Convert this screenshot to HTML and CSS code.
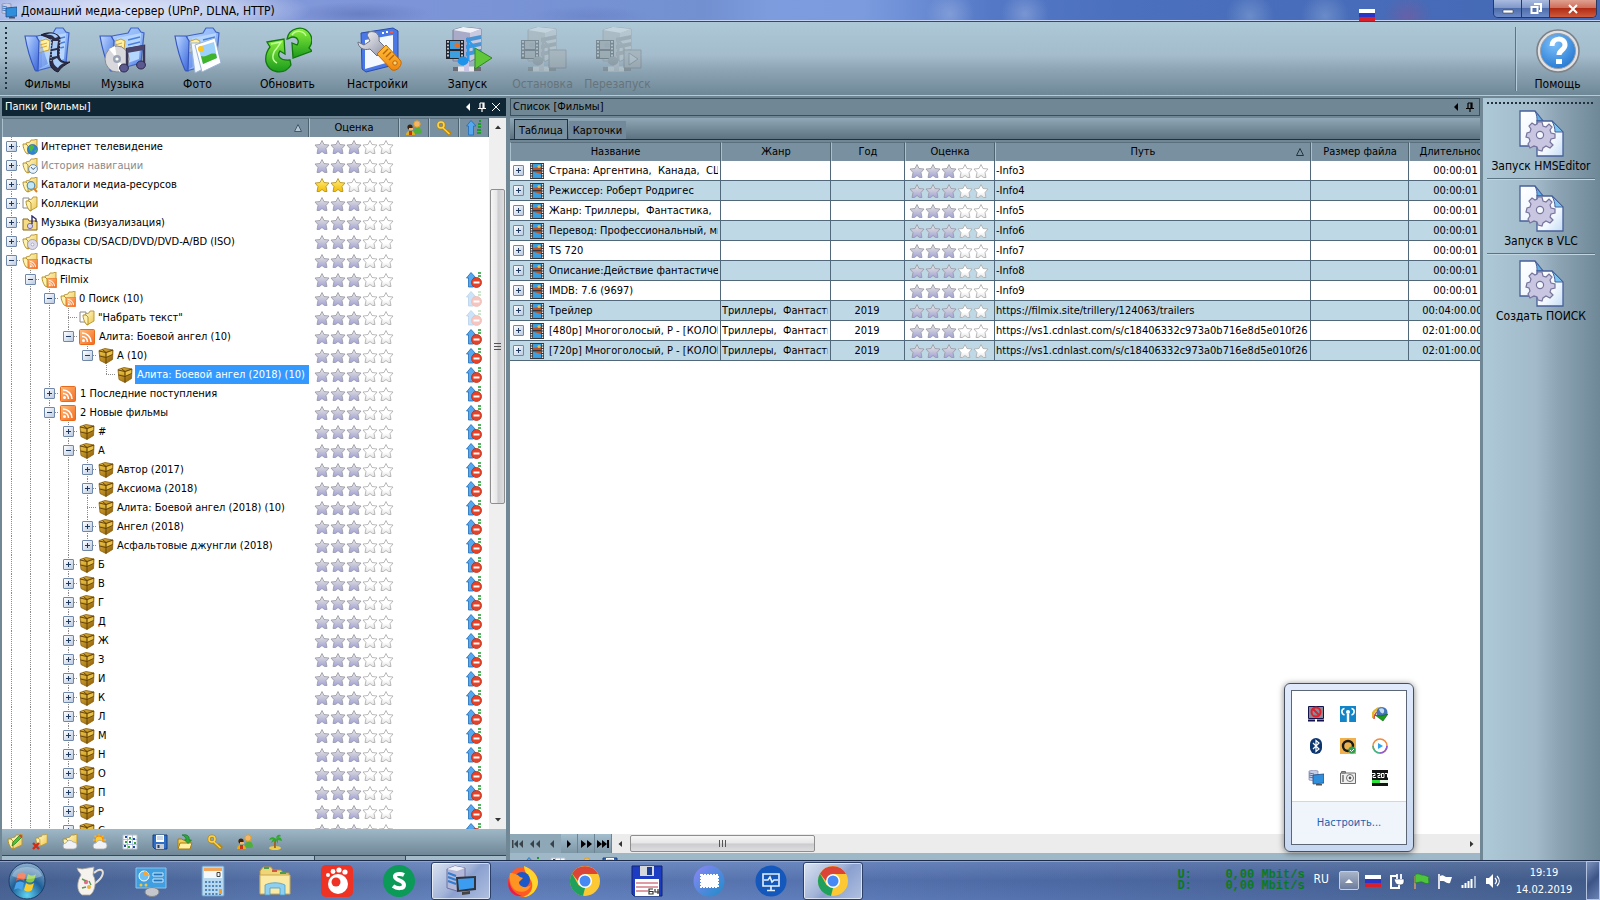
FILE: index.html
```html
<!DOCTYPE html>
<html lang="ru">
<head>
  <meta charset="UTF-8" />
  <title>Домашний медиа-сервер (UPnP, DLNA, HTTP)</title>
  <meta name="viewport" content="width=device-width, initial-scale=1" />
  <link rel="stylesheet" href="styles.css">
</head>
<body>

  <!-- Icon sprite -->
  <svg class="sprite" aria-hidden="true">
    <defs>
      <linearGradient id="gBlue" x1="0" y1="0" x2="1" y2="1"><stop offset="0" stop-color="#c4daff"/><stop offset=".5" stop-color="#78a0f0"/><stop offset="1" stop-color="#3a62d4"/></linearGradient>
      <linearGradient id="gBody" x1="0" y1="0" x2="1" y2="1"><stop offset="0" stop-color="#b4d2ff"/><stop offset=".6" stop-color="#8ab2f6"/><stop offset="1" stop-color="#4a76e0"/></linearGradient>
      <linearGradient id="gGreen" x1="0" y1="0" x2="0" y2="1"><stop offset="0" stop-color="#8cf03c"/><stop offset="1" stop-color="#1a9a1c"/></linearGradient>
      <linearGradient id="gOrange" x1="0" y1="0" x2="0" y2="1"><stop offset="0" stop-color="#ffc23a"/><stop offset="1" stop-color="#f0870f"/></linearGradient>
      <linearGradient id="gSteel" x1="0" y1="0" x2="1" y2="1"><stop offset="0" stop-color="#ffffff"/><stop offset="1" stop-color="#8c90a4"/></linearGradient>
      <linearGradient id="gPage" x1="0" y1="0" x2="1" y2="1"><stop offset="0" stop-color="#ffffff"/><stop offset=".6" stop-color="#f2f8ff"/><stop offset="1" stop-color="#c4dcf4"/></linearGradient>
      <linearGradient id="gStar" x1="0" y1="0" x2="0" y2="1"><stop offset="0" stop-color="#e8e7ee"/><stop offset=".5" stop-color="#c8c7d8"/><stop offset="1" stop-color="#a2a2da"/></linearGradient>
      <linearGradient id="gGold" x1="0" y1="0" x2="0" y2="1"><stop offset="0" stop-color="#fff08a"/><stop offset="1" stop-color="#f2bd00"/></linearGradient>
      <linearGradient id="gEmpty" x1="0" y1="0" x2="0" y2="1"><stop offset="0" stop-color="#ffffff"/><stop offset=".6" stop-color="#ffffff"/><stop offset="1" stop-color="#e2e2e2"/></linearGradient>
      <linearGradient id="gBox" x1="0" y1="0" x2="1" y2="1"><stop offset="0" stop-color="#e8bd3c"/><stop offset="1" stop-color="#8a5a08"/></linearGradient>
      <linearGradient id="gFold" x1="0" y1="0" x2="1" y2="1"><stop offset="0" stop-color="#fffbd0"/><stop offset="1" stop-color="#eec64a"/></linearGradient>
      <linearGradient id="gRss" x1="0" y1="0" x2="1" y2="1"><stop offset="0" stop-color="#ffbf80"/><stop offset="1" stop-color="#f4691c"/></linearGradient>
      <radialGradient id="gHelp" cx=".4" cy=".3" r=".8"><stop offset="0" stop-color="#7cc0fa"/><stop offset="1" stop-color="#1e72cf"/></radialGradient>
      <radialGradient id="gOrb" cx=".5" cy=".9" r=".9"><stop offset="0" stop-color="#5fd4f4"/><stop offset=".5" stop-color="#1f5f98"/><stop offset="1" stop-color="#8fb2d0"/></radialGradient>
      <linearGradient id="gTicket" x1="0" y1="0" x2="1" y2="1"><stop offset="0" stop-color="#8f86f6"/><stop offset="1" stop-color="#1c8cc8"/></linearGradient>
    </defs>

    <!-- toolbar -->
    <symbol id="bigFolder" viewBox="0 0 48 48">
      <path d="M13 9l16-3 3-5h7l3 4 3 1-3 30-30 8z" fill="url(#gBody)" stroke="#3f64c4" stroke-width="1.2"/>
      <path d="M18 11l24-5-2 26-22 8z" fill="#b4d6ff"/>
      <path d="M29 13l12-3M29 18l12-3M29 23l11-3" stroke="#4a80dc" stroke-width="1.3"/>
      <path d="M14 15l8-3 4 2-1 9-11 3z" fill="#fff0a4" stroke="#c8a02c"/><path d="M16 18l7-2M16 21l7-2" stroke="#e0a82c"/>
      <path d="M1 9l11 0 5 6 7 22-13 7c-5-12-8-23-10-35z" fill="url(#gBlue)" opacity=".55"/>
      <path d="M1 9l11 0 3 5-1 30-3-1C6 32 3 21 1 9z" fill="url(#gBlue)" stroke="#3558c0" stroke-width="1.2"/>
    </symbol>
    <symbol id="films" viewBox="0 0 48 48">
      <use href="#bigFolder"/>
      <path d="M17 8c7-4 17-2 19 3l-1 18c1 5 5 7 11 6-5 3-9 5-12 10-7-2-9-8-8-14l2-16c-1-4-6-5-11-7z" fill="#2c2e48" stroke="#1c1c30"/>
      <path d="M22 8c4-1 7 0 9 3l3-1c-1-3-7-5-12-2zM29 14h5l-1 7-5 1zM28 24l5-1v6l-5 1zM29 33l4-2c2 3 4 5 7 5-3 1-5 3-6 5-3-2-5-4-5-8z" fill="#a9cdf8"/>
      <path d="M27 12v22M36 12v16" stroke="#d8dcec" stroke-width="1" stroke-dasharray="1.2 1.8"/>
    </symbol>
    <symbol id="music" viewBox="0 0 48 48">
      <use href="#bigFolder"/>
      <ellipse cx="18" cy="32" rx="12" ry="13" fill="#d9d9dd" stroke="#8a8a90"/>
      <path d="M18 32L10 22l6-3zM18 32l8 9-6 4z" fill="#fff"/>
      <circle cx="18" cy="32" r="4" fill="#9aa4b4"/><circle cx="18" cy="32" r="1.6" fill="#fff"/>
      <path d="M28 40V22l17-3v19" fill="none" stroke="#3a3658" stroke-width="2.4"/><path d="M28 21l17-3v5l-17 3z" fill="#4a466c"/>
      <ellipse cx="25" cy="41" rx="4.4" ry="4" fill="#5c5890" stroke="#2c2848"/><ellipse cx="42" cy="38" rx="4.4" ry="4" fill="#5c5890" stroke="#2c2848"/>
    </symbol>
    <symbol id="photo" viewBox="0 0 48 48">
      <use href="#bigFolder"/>
      <path d="M17 16l14 0 2 24-12 6z" fill="#f2f8ff" stroke="#9bb4d4"/>
      <path d="M21 18l20-7 6 25-19 9z" fill="#fff" stroke="#9bb4d4"/>
      <path d="M24 20l16-5 3 16-14 6z" fill="#9fd2fb"/><path d="M27 29c6 2 8-4 15-2l1 4-14 6z" fill="#3fb42a"/><circle cx="27" cy="22" r="3" fill="#ffc41e"/>
    </symbol>
    <symbol id="refresh" viewBox="0 0 48 48">
      <path d="M3 15l17-3 1 15-5-3c-3 4-1 10 10 9l1 5c-7 11-22 8-25-3-1-6 0-10 4-15z" fill="url(#gGreen)" stroke="#12780f" stroke-width="1.3"/>
      <path d="M23 12C25 1 39-3 46 7c3 5 2 10-1 14l3 3-19 7-1-15 5 2c3-4 0-8-4-8-3 0-4 2-6 2z" fill="url(#gGreen)" stroke="#12780f" stroke-width="1.3"/>
      <path d="M7 17l10-2-4 6c-5 5-6 12 0 15M28 8c4-6 12-4 14 1" fill="none" stroke="#c4ffa0" stroke-width="1.4"/>
    </symbol>
    <symbol id="settings" viewBox="0 0 48 48">
      <path d="M7 6l32-5 5 3v33l-32 8-4-3z" fill="#4a78e4" stroke="#2a4cae"/>
      <path d="M11 13l28-5v26l-28 8z" fill="#f4f8ff"/>
      <path d="M28 6h2M32 5h2" stroke="#fff" stroke-width="2"/><path d="M36 5h3" stroke="#e8604c" stroke-width="2"/>
      <path d="M15 5c8-2 11 4 10 9l6 6-8 9-7-7c-7 2-12-2-12-7l6 3 6-4-3-6z" fill="url(#gSteel)" stroke="#6c7084"/>
      <path d="M23 27l9-9 14 15c4 4-3 12-8 10z" fill="url(#gOrange)" stroke="#c06a08"/>
      <path d="M29 27l5-5M32 30l5-5M35 33l5-5" stroke="#b86408" stroke-width="1.4"/><circle cx="41" cy="36" r="2.2" fill="#ffd27a" stroke="#b86408"/>
    </symbol>
    <symbol id="server" viewBox="0 0 48 48">
      <path d="M9 3l10-3 18 2v27l-10 5H9z" fill="#a9abc8" stroke="#7a7c9c"/><path d="M9 3l10-3 18 2-10 4z" fill="#f1f2f8"/>
      <path d="M26 6l11-4v26l-11 6z" fill="#c9cae0"/>
      <path d="M22 11l15-3v4l-15 3zM22 18l15-3v4l-15 3zM22 25l15-3v4l-15 3z" fill="#4a94d4"/>
      <path d="M9 42h28" stroke="#6c6c78" stroke-width="4"/><path d="M14 42h16" stroke="#e8e8ee" stroke-width="5"/><path d="M20 34h5v10h-5z" fill="#c9c4e4"/>
      <path d="M2 13h18v19H2z" fill="#23252e"/><path d="M6 14h10v8H6zM6 24h10v7H6z" fill="#3c9fe0"/><circle cx="13" cy="18" r="2.600" fill="#e2702a"/>
      <path d="M4 14v17M18 14v17" stroke="#e8eef4" stroke-width="1.6" stroke-dasharray="1.8 1.6"/>
      <path d="M24 34V13c3 4 8 5 5 14" fill="none" stroke="#2a9df0" stroke-width="2.2"/><ellipse cx="19" cy="34" rx="5.4" ry="4.4" fill="#1f93ea"/>
    </symbol>
    <symbol id="start" viewBox="0 0 48 48"><use href="#server"/><path d="M31 21l17 10-17 11z" fill="#62c63a" stroke="#2c8a1c"/></symbol>
    <symbol id="stop" viewBox="0 0 48 48"><use href="#server"/><path d="M30 23h17v18H30z" fill="#a8a8a8" stroke="#666"/></symbol>
    <symbol id="restart" viewBox="0 0 48 48"><use href="#server"/><path d="M30 23h17v18H30z" fill="#a8a8a8" stroke="#666"/><path d="M35 26l9 6-9 6z" fill="#c8c8c8" stroke="#666"/></symbol>
    <symbol id="help" viewBox="0 0 48 48">
      <circle cx="24" cy="24" r="21" fill="#dfe1e4" stroke="#7f8388" stroke-width="1.6"/><circle cx="24" cy="24" r="17.5" fill="url(#gHelp)" stroke="#9a9da2"/>
      <path d="M18 19c0-9 13-9 13-1 0 5-6 5-6 10" fill="none" stroke="#fff" stroke-width="5"/><path d="M22 32h6v5h-6z" fill="#fff"/>
    </symbol>
    <symbol id="script" viewBox="0 0 48 48">
      <path d="M3 2h15l8 10v25H3z" fill="url(#gPage)" stroke="#48609a" stroke-width="1.3"/><path d="M18 2l8 10h-6c0-3 0-6-2-10z" fill="#5fb0e8" stroke="#48609a"/>
      <path d="M20 12h15l11 11v24H20z" fill="url(#gPage)" stroke="#48609a" stroke-width="1.3"/><path d="M35 12l11 11h-8c0-4-1-7-3-11z" fill="#7cc4f0" stroke="#48609a"/>
      <path d="M21 13l4 0 1 4 3 1 3-3 3 3-2 3 1 3 4 1v4l-4 1-1 3 3 3-3 3-4-2-3 2-1 3-4-1-1-3-3-1-4 2-2-4 2-3-1-3-3-1 1-4 3-1 1-3-2-3 3-3 3 2 2-1z" fill="#c9c6e2" stroke="#77749c" stroke-width="1.2"/>
      <circle cx="23" cy="26" r="3.6" fill="#f4f8ff" stroke="#77749c" stroke-width="1.2"/>
    </symbol>

    <!-- stars -->
    <symbol id="star" viewBox="0 0 16 16"><path d="M8 1.500l2 4 5 .5-3 3.500 1 5H10.500L8 12.500l-2.500 2H3l1-5L1 6l5-.5z"/></symbol>

    <!-- 16px -->
    <symbol id="folder" viewBox="0 0 16 16">
      <path d="M4 4l4-1 1-2h3l3-1v11l-9 4z" fill="url(#gFold)" stroke="#b8922c" stroke-width=".9"/>
      <path d="M1 5h3l2 2v8l-2-1C2 11 1 8 1 5z" fill="#fdf2b0" stroke="#b08a1c" stroke-width=".9"/>
    </symbol>
    <symbol id="tv" viewBox="0 0 16 16"><use href="#folder"/><circle cx="10.500" cy="10.500" r="5" fill="#2f86d8" stroke="#1c5c9c" stroke-width=".6"/><path d="M7 8c2-3 5-2 5 0s-2 2-2 4-3-1-3-4zM12 12l3-2-1 4z" fill="#49b83c"/></symbol>
    <symbol id="history" viewBox="0 0 16 16"><use href="#folder"/><circle cx="11" cy="11" r="4.400" fill="#e8f2fb" stroke="#6f8fae"/><path d="M9 9l2 2.500 2.500-2" fill="none" stroke="#3f5f7e"/></symbol>
    <symbol id="catalog" viewBox="0 0 16 16"><use href="#folder"/><circle cx="9" cy="8.500" r="3.800" fill="#c2e8f8" stroke="#5c8cae" stroke-width="1.2"/><path d="M12 11.500l3 3.500" stroke="#d8802c" stroke-width="2"/></symbol>
    <symbol id="collection" viewBox="0 0 16 16"><path d="M1 2h6v10H1z" fill="#fff" stroke="#8a8a8a"/><path d="M6 4l4-1 1-2h4v10l-7 4z" fill="url(#gFold)" stroke="#b8922c" stroke-width=".9"/><path d="M4 5h3l2 2v8l-2-1c-2-3-3-6-3-9z" fill="#fdf2b0" stroke="#b08a1c" stroke-width=".9"/></symbol>
    <symbol id="musicFolder" viewBox="0 0 16 16"><path d="M1 4h5l1 2h8v9H1z" fill="#f6dc84" stroke="#8a6410"/><circle cx="8" cy="11" r="2.600" fill="#d8d4f0" stroke="#7872a8"/><path d="M10 9V1l4 3v3" fill="none" stroke="#2c2c6c" stroke-width="1.400"/></symbol>
    <symbol id="disc" viewBox="0 0 16 16"><use href="#folder"/><circle cx="10.500" cy="10.500" r="5" fill="#dcdae8" stroke="#9490b0" stroke-width=".8"/><circle cx="10.500" cy="10.500" r="1.400" fill="#fff" stroke="#9490b0" stroke-width=".7"/></symbol>
    <symbol id="rss" viewBox="0 0 16 16"><rect x=".5" y=".5" width="15" height="15" rx="1" fill="url(#gRss)" stroke="#e86a1c"/><circle cx="4.500" cy="11.500" r="1.500" fill="#fff"/><path d="M3 7.500c3 0 5.500 2 5.500 5.500M3 4c5 0 9 4 9 9" fill="none" stroke="#fff" stroke-width="1.600"/></symbol>
    <symbol id="rssFolder" viewBox="0 0 16 16"><use href="#folder"/><svg x="6" y="6" width="10" height="10" viewBox="0 0 16 16"><use href="#rss"/></svg></symbol>
    <symbol id="box" viewBox="0 0 16 16">
      <path d="M1 2.500L7 .5l8 1.500-.5 9.500L8 15.500l-6-3z" fill="url(#gBox)" stroke="#8a5e0c" stroke-width=".8"/>
      <path d="M8.500 5l5.500-2v4l-5.500 2z" fill="#f4cf52" opacity=".8"/><path d="M2 3.500l5 1.500v3L2.500 7z" fill="#f0c848" opacity=".5"/>
      <path d="M1 3l7 1.500 7-2.500M8 4.500v11M1.500 8L8 9.500l6.500-3M4.500 1.500L8 4.500" fill="none" stroke="#5c3c08" stroke-width=".9"/>
    </symbol>
    <symbol id="arrowUp" viewBox="0 0 16 16"><path d="M5 .5L10 6H7.500v9h-5V6H.5z" fill="#55a8ee" stroke="#1f6cb8" stroke-width=".8"/></symbol>
    <symbol id="noSync" viewBox="0 0 16 16"><use href="#arrowUp"/><path d="M12 1h3M12 4h3" stroke="#1c9a2c" stroke-width="1.600"/><circle cx="10.500" cy="10.500" r="5" fill="#e5432a" stroke="#b42c18" stroke-width=".8"/><path d="M7.500 10.500h6" stroke="#fff" stroke-width="2"/></symbol>
    <symbol id="sync" viewBox="0 0 16 16"><use href="#arrowUp"/><path d="M13 1h2M12 4h3M12 7h3M11 10h4M11 13h4" stroke="#1c9a2c" stroke-width="1.800"/></symbol>
    <symbol id="key" viewBox="0 0 16 16"><path d="M6.500 8l7 6.500M11 12l2-2M13 14l2-2" stroke="#b8860c" stroke-width="2.800"/><circle cx="5" cy="5" r="3" fill="none" stroke="#b8860c" stroke-width="3"/><circle cx="5" cy="5" r="3" fill="none" stroke="#ffd44a" stroke-width="1.600"/><path d="M7 8l6.500 6" stroke="#ffd44a" stroke-width="1.400"/></symbol>
    <symbol id="users" viewBox="0 0 16 16"><circle cx="11" cy="4" r="3.200" fill="#f4b56c" stroke="#e0a020" stroke-width="1"/><path d="M7 14c0-8 9-8 9-2l-1 2z" fill="#4fae3c"/><circle cx="4" cy="7" r="2.600" fill="#3a2410"/><path d="M3 8h4v2H3z" fill="#f4b56c"/><path d="M0 15c0-6 9-6 9 0z" fill="#e0b01c"/><path d="M3 11h3v4H3z" fill="#c83418"/></symbol>
    <symbol id="film" viewBox="0 0 16 16"><path d="M1 0h14v16H1z" fill="#34363c"/><path d="M4 1h8v6H4zM4 8.500h8V15H4z" fill="#3aa0e0"/><path d="M4 5l8-1v3H4zM5 9h7v2z" fill="#b4532c"/><circle cx="10" cy="3.500" r="1.500" fill="#e8c04a"/><path d="M2.500 1v14M13.500 1v14" stroke="#e4e8ec" stroke-width="1.400" stroke-dasharray="1.500 1"/></symbol>
    <symbol id="edit" viewBox="0 0 16 16"><use href="#folder"/><path d="M5 12l1-4 7-7 2 2-7 7z" fill="#4fc03c" stroke="#1f7a14" stroke-width=".7"/><path d="M12 2l2-1.500L15.500 2l-1 1.500z" fill="#e03c2c"/></symbol>
    <symbol id="delete" viewBox="0 0 16 16"><svg x="3" width="13" height="13" viewBox="0 0 16 16"><use href="#folder"/></svg><path d="M1 9l6 6M7 9l-6 6" stroke="#d42a14" stroke-width="2.400"/></symbol>
    <symbol id="cloud" viewBox="0 0 16 16"><path d="M4 15a3 3 0 0 1 0-6 4 4 0 0 1 7-1 3.500 3.500 0 0 1 1 7z" fill="#f0f2f5" stroke="#a4a8ae" stroke-width=".8"/></symbol>
    <symbol id="cloudFolder" viewBox="0 0 16 16"><use href="#folder"/><use href="#cloud"/></symbol>
    <symbol id="weather" viewBox="0 0 16 16"><path d="M7 0v13M1 6h13M2.500 1.500l9 9M11.500 1.500l-9 9" stroke="#ffb41e" stroke-width="1.400"/><circle cx="7" cy="6" r="4" fill="#ffcf2e" stroke="#f08a14"/><use href="#cloud"/></symbol>
    <symbol id="grid" viewBox="0 0 16 16"><path d="M1 1h14v14H1z" fill="#fff" stroke="#b8c0cc"/><path d="M1 5.500h14M1 10.500h14M5.500 1v14M10.500 1v14" stroke="#a4b8d4" stroke-width=".8"/><path d="M3 2h2v2H3zM11 4h2v2h-2zM7 7h2v2H7zM2 11h2v2H2zM11 12h2v2h-2z" fill="#1c4ca8"/><path d="M7 3h2v2H7zM3 7h2v2H3zM12 8h2v2h-2zM6 12h2v2H6z" fill="#2ca83c"/></symbol>
    <symbol id="save" viewBox="0 0 16 16"><path d="M1 1h14v14H3l-2-2z" fill="#2f6fc8" stroke="#173f80"/><path d="M4 1h8v7H4z" fill="#fff"/><path d="M5 3h6M5 5h6" stroke="#9ab4d4"/><path d="M4 10h8v5H4z" fill="#c8ccd4"/><path d="M5.500 11h2v3h-2z" fill="#1c3c74"/></symbol>
    <symbol id="open" viewBox="0 0 16 16"><path d="M1 14V5h4l1 1h7v8z" fill="#f2cf5a" stroke="#a87c10"/><path d="M1 15l2-6h12l-2 6z" fill="#fff0a4" stroke="#a87c10"/><path d="M5 1c5-1 8 1 7 5h2.500L11 9.500 7.500 6H9c0-2-1-4-4-5z" fill="#2ca83c" stroke="#12701c" stroke-width=".6"/></symbol>
    <symbol id="palm" viewBox="0 0 16 16"><ellipse cx="8" cy="14" rx="6" ry="2" fill="#f0cc48"/><path d="M8 14c0-3-1-5 1-9" fill="none" stroke="#9c6420" stroke-width="1.800"/><path d="M9 5C6 2 3 3 2 6l4-1-2 4 5-3 2 4 0-4 4 1c0-4-4-5-6-2zM9 4c1-4 4-4 5-2z" fill="#2fa82c"/></symbol>
    <symbol id="pin" viewBox="0 0 10 10"><path d="M3 1h4v5M3 1v5M6 1v5M1 6.500h8M5 7v3" fill="none" stroke="currentColor" stroke-width="1.200"/></symbol>
    <symbol id="app" viewBox="0 0 16 16"><path d="M1 1l5-1 4 1v9l-4 1-5-1z" fill="#c8cce4" stroke="#8488b0" stroke-width=".7"/><path d="M1 3l5 1M1 5l5 1M1 7l5 1" stroke="#4c7cc0"/><path d="M5 5l11-1v9l-11 1z" fill="#2f8fdc" stroke="#1c4c84" stroke-width=".8"/><path d="M8 14h6v1.500H8z" fill="#555"/></symbol>
    <symbol id="flagRu" viewBox="0 0 16 12" preserveAspectRatio="none"><path d="M0 0h16v4H0z" fill="#fff"/><path d="M0 4h16v4H0z" fill="#2a35c8"/><path d="M0 8h16v4H0z" fill="#d8202c"/></symbol>

    <!-- taskbar -->
    <symbol id="orb" viewBox="0 0 38 38">
      <circle cx="19" cy="19" r="18" fill="url(#gOrb)" stroke="#1f3c64"/>
      <path d="M10 12c3-2 5-2 8 0l-2 7c-3-2-5-2-8 0z" fill="#f0582a"/><path d="M20 12c3 2 5 2 8 0l-2 7c-3 2-5 2-8 0z" fill="#8ccc3c"/><path d="M8 21c3-2 5-2 8 0l-2 7c-3-2-5-2-8 0z" fill="#4aa4ec"/><path d="M18 21c3 2 5 2 8 0l-2 7c-3 2-5 2-8 0z" fill="#fccc2c"/>
      <path d="M4 14C7 2 31 2 34 14c-8 4-22 4-30 0z" fill="#fff" opacity=".3"/>
    </symbol>
    <symbol id="jug" viewBox="0 0 32 32"><path d="M21 8c6-6 11-3 8 3-2 4-5 6-8 8" fill="none" stroke="#e4e0d8" stroke-width="2"/><path d="M4 3l5 1 12-2-1 8c4 6 2 17-3 20H9c-6-4-5-14-1-20-1-3-3-3-4-7z" fill="#f6f3ee" stroke="#a8a49c" stroke-width=".8"/><circle cx="13" cy="17" r="2.200" fill="#e0708c"/><circle cx="16" cy="22" r="2" fill="#e8b43c"/><path d="M9 14l4 2M9 23l4-1M16 16l2 4" stroke="#5c9c54" stroke-width="1.400"/></symbol>
    <symbol id="control" viewBox="0 0 32 32"><path d="M1 3h30v20H1z" fill="#3f9fe0" stroke="#8cc4ec"/><circle cx="9" cy="11" r="5" fill="#6cc0f4" stroke="#fff"/><path d="M9 11V6a5 5 0 0 1 5 5z" fill="#f4a83c"/><path d="M18 8h10v3H18zM18 14h10v3H18z" fill="#2374b8" stroke="#d4e8f8"/><circle cx="6" cy="20" r="1.500" fill="#f4c43c"/><circle cx="11" cy="20" r="1.500" fill="#f4c43c"/><ellipse cx="17" cy="27" rx="7" ry="4.500" fill="#c4c8cc" stroke="#888"/></symbol>
    <symbol id="calc" viewBox="0 0 32 32"><rect x="5" y="1" width="22" height="30" rx="1" fill="#b8d8f0" stroke="#6898c4"/><path d="M7 3h18v3H7z" fill="#f2a65c"/><path d="M7 6h18v7H7z" fill="#f4f8fb"/><path d="M20 7.500h3v4h-3z" fill="none" stroke="#444"/><path d="M8 17h16M8 21h16M8 25h16M8 29h16" stroke="#4c84bc" stroke-width="2" stroke-dasharray="2 1.500"/><path d="M22 24h3v5h-3z" fill="#f0a030"/></symbol>
    <symbol id="explorer" viewBox="0 0 32 32"><path d="M1 6l3-4h8l2 3h8l2 3h6v20H1z" fill="#f0d478" stroke="#b89434"/><path d="M5 3h5M21 8h6" stroke="#4c9c4c" stroke-width="1.800"/><path d="M13 6h5" stroke="#d04c3c" stroke-width="1.800"/><path d="M1 10h30v19H1z" fill="#fbeaa6" stroke="#c8a850"/><path d="M6 30V20c6-3 14-3 20 0v10h-5v-7H11v7z" fill="#8fd0f0" stroke="#4c9cc8" stroke-width=".8"/></symbol>
    <symbol id="gom" viewBox="0 0 32 32"><rect width="32" height="32" rx="5" fill="#ee3224"/><circle cx="17" cy="19" r="10" fill="#fff"/><circle cx="15" cy="17" r="4.500" fill="#ee3224"/><circle cx="7" cy="10" r="2" fill="#fff"/><circle cx="12" cy="6.500" r="2.400" fill="#fff"/><circle cx="18" cy="5" r="2.600" fill="#fff"/><circle cx="24" cy="7" r="2.600" fill="#fff"/></symbol>
    <symbol id="sapp" viewBox="0 0 32 32"><circle cx="16" cy="16" r="16" fill="#0b9a58"/><path d="M21 10c-4-2-10-1-9 2 1 4 9 3 9 8 0 4-7 4-11 1" fill="none" stroke="#fff" stroke-width="4"/></symbol>
    <symbol id="firefox" viewBox="0 0 32 32"><circle cx="16" cy="17" r="15" fill="#ff5a26"/><path d="M17 1c8 3 14 9 14 16S25 32 16 32c8-3 10-8 9-14-1-5-8-9-8-17z" fill="#ffd42c"/><circle cx="15" cy="15" r="8" fill="#1c58c8"/><path d="M3 8c4 0 7 1 10 4l3 1-4 4c0 5 7 7 12 3-3 8-13 9-18 3-3-4-4-10-3-15z" fill="#ff9422"/><path d="M2 13c0 10 6 16 13 18C5 32-1 24 2 13z" fill="#e4204c"/></symbol>
    <symbol id="chrome" viewBox="0 0 32 32"><circle cx="16" cy="16" r="15" fill="#fcc934"/><path d="M3 8.500L9.500 20 16 23l-2 8A15 15 0 0 1 3 8.500z" fill="#1fa15d"/><path d="M3 8.500A15 15 0 0 1 29 9H16L9 16z" fill="#db4437"/><circle cx="16" cy="16" r="7" fill="#fff"/><circle cx="16" cy="16" r="5.500" fill="#4688f4"/></symbol>
    <symbol id="commander" viewBox="0 0 32 32"><path d="M1 1h30v30H3l-2-2z" fill="#1c3cc4" stroke="#12246c"/><path d="M9 1h14v10H9z" fill="#d4d8dc"/><path d="M16 2h5v8h-5z" fill="#1c3c94"/><path d="M4 14h24v17H4z" fill="#fff"/><path d="M5 18h22M5 22h22M5 26h12" stroke="#c03848" stroke-width="1.200"/><path d="M22 24h-4v5h4v-2.500h-4M24 24v3h4M27 24v5" fill="none" stroke="#333" stroke-width="1.200"/></symbol>
    <symbol id="ticket" viewBox="0 0 32 32"><circle cx="16" cy="16" r="15.500" fill="url(#gTicket)"/><path d="M8 10h17v12H8z" fill="#fff" stroke="#fff" stroke-width="2" stroke-dasharray="2 1"/></symbol>
    <symbol id="monitor" viewBox="0 0 32 32"><circle cx="16" cy="16" r="15.500" fill="#1458bc"/><path d="M8 9h16v12H8zM16 21v4M12 25.500h8M9 15h4l2-3 2 5 2-2h4" fill="none" stroke="#e4f0fc" stroke-width="1.600"/></symbol>
    <symbol id="mediaServer" viewBox="0 0 32 32"><path d="M2 4l8-3 10 2v19l-8 4-10-3z" fill="#b4b8d8" stroke="#6c70a0"/><path d="M2 4l8-3 10 2-8 3z" fill="#eef0f8"/><path d="M3 8l8 3M3 12l8 3M3 16l8 3" stroke="#2f7cd0" stroke-width="2"/><path d="M11 12l20-1v14l-19 2z" fill="#30343c"/><path d="M13 14l16-1v10l-15 2z" fill="#3c9cf0"/><path d="M17 27l8-1v3l-8 1z" fill="#444"/></symbol>

    <!-- tray -->
    <symbol id="netOff" viewBox="0 0 16 16"><path d="M.5.500h15v12H.5z" fill="#8c8c98" stroke="#12124c"/><circle cx="8" cy="6" r="4.500" fill="none" stroke="#e0202c" stroke-width="2"/><path d="M5 3l6 6" stroke="#e0202c" stroke-width="2"/><path d="M0 14.500h7M9 14.500h7" stroke="#12124c" stroke-width="2"/></symbol>
    <symbol id="wifi" viewBox="0 0 16 16"><path d="M0 0h16v16H0z" fill="#1284c8"/><circle cx="8" cy="6" r="2" fill="#fff"/><path d="M8 8v8" stroke="#fff" stroke-width="2.400"/><path d="M4.500 2.500C1 3 1 8 4.500 9M11.500 2.500C15 3 15 8 11.500 9" fill="none" stroke="#fff" stroke-width="1.600"/></symbol>
    <symbol id="idm" viewBox="0 0 16 16"><path d="M1 12C-1 6 5 2 9 2" fill="none" stroke="#e4b42c" stroke-width="2.400"/><path d="M2 13c0-5 3-8 7-8" fill="none" stroke="#d4483c" stroke-width="1.600"/><circle cx="10" cy="6.500" r="5.500" fill="#4474b8"/><path d="M7 3c3-2 6 0 5 3s-4 1-5-3z" fill="#c4dcec"/><path d="M3 9l6 1 7-2-5 7z" fill="#1c9c1c" stroke="#0c5c0c" stroke-width=".6"/></symbol>
    <symbol id="bluetooth" viewBox="0 0 16 16"><rect x="2" width="12" height="16" rx="6" fill="#0d3570"/><path d="M5 5l6 6-3 2.500v-11L11 5l-6 6" fill="none" stroke="#fff" stroke-width="1.200"/></symbol>
    <symbol id="qip" viewBox="0 0 16 16"><path d="M0 0h16v16H0z" fill="#f0b04c"/><circle cx="8" cy="8" r="5" fill="none" stroke="#1c1c1c" stroke-width="2.400"/><circle cx="12" cy="12" r="3.600" fill="#2ca04c"/><path d="M10 12l1.500 1.500L14 11" fill="none" stroke="#fff"/></symbol>
    <symbol id="player" viewBox="0 0 16 16"><circle cx="8" cy="8" r="7" fill="#fff" stroke="#f08a3c" stroke-width="1.600"/><path d="M1 8a7 7 0 0 0 7 7" fill="none" stroke="#3cb88c" stroke-width="1.600"/><path d="M8 15a7 7 0 0 0 7-7" fill="none" stroke="#8c5cd8" stroke-width="1.600"/><path d="M6 5l5 3-5 3z" fill="#2ca4f0"/></symbol>
    <symbol id="camera" viewBox="0 0 16 16"><path d="M.5 3h5V1.500h-4V3h14v10.500H.5z" fill="#f0f0f0" stroke="#6c6c6c"/><path d="M3 5v7" stroke="#6c6c6c" stroke-width="1.400"/><circle cx="10" cy="8" r="3.500" fill="#fff" stroke="#6c6c6c"/><circle cx="10" cy="8" r="1.400" fill="#555"/></symbol>
    <symbol id="meter" viewBox="0 0 16 16"><path d="M0 0h16v16H0z" fill="#141414"/><path d="M0 3.500h3v2H1v2h3M5 3.500h3v2H6v2h2.500M9.500 3.500h2.500v4H9.500zM13 3.500h2.500v4" fill="none" stroke="#fff" stroke-width="1"/><path d="M0 10h8v3H0z" fill="#2ce43c"/><path d="M8 10h8v3H8z" fill="#e4f8e4"/></symbol>
    <symbol id="plug" viewBox="0 0 16 16"><path d="M8 3H2v12h8v-2" fill="none" stroke="#fff" stroke-width="2"/><path d="M5 6h10v3c0 4-8 4-9 0z" fill="#fff" stroke="#2c3c5c" stroke-width=".6"/><path d="M8 1v5M12 1v5M10 12v2" stroke="#fff" stroke-width="1.800"/></symbol>
    <symbol id="greenFlag" viewBox="0 0 16 16"><path d="M2 3v13" stroke="#c89c6c" stroke-width="1.600"/><path d="M2 2c4-3 6 1 9 0l5 2c-1 3 0 4 0 6-4 2-6-2-9-1l-5 1z" fill="#4cc43c" stroke="#1f7a1c" stroke-width=".6"/></symbol>
    <symbol id="flag" viewBox="0 0 16 16"><path d="M2 1v15" stroke="#fff" stroke-width="1.600"/><path d="M3 3c3-2 4 0 6 1l6 0-2 6c-4 1-5-2-7-2H3z" fill="#fff"/></symbol>
    <symbol id="signal" viewBox="0 0 16 16"><path d="M1.500 15v-3M4.500 15v-5M7.500 15V8M10.500 15V6" stroke="#fff" stroke-width="2"/><path d="M14 15V3" stroke="#a8b8d0" stroke-width="2"/></symbol>
    <symbol id="speaker" viewBox="0 0 16 16"><path d="M1 5h3l4-4v14l-4-4H1z" fill="#fff"/><path d="M10 5c2 2 2 4 0 6M12 3c3 3 3 7 0 10" fill="none" stroke="#fff" stroke-width="1.200"/></symbol>
  </svg>

  <header class="titlebar">
    <svg class="i16"><use href="#app"/></svg>
    <h1>Домашний медиа-сервер (UPnP, DLNA, HTTP)</h1>
    <svg class="title-flag"><use href="#flagRu"/></svg>
    <div class="win-buttons">
      <button type="button" class="win-btn" aria-label="Свернуть"><svg viewBox="0 0 12 12"><path d="M1 7h10v3H1z"/></svg></button>
      <button type="button" class="win-btn" aria-label="Восстановить"><svg viewBox="0 0 12 12"><path d="M4 1h7v7H9M1.500 4h6v6h-6z" class="stroke"/></svg></button>
      <button type="button" class="win-btn win-close" aria-label="Закрыть"><svg viewBox="0 0 12 12"><path d="M2 2l8 8M10 2l-8 8" class="stroke"/></svg></button>
    </div>
  </header>

  <nav class="toolbar">
    <span class="grip"></span>
    <button type="button" class="tool"><svg><use href="#films"/></svg>Фильмы</button>
    <button type="button" class="tool"><svg><use href="#music"/></svg>Музыка</button>
    <button type="button" class="tool"><svg><use href="#photo"/></svg>Фото</button>
    <button type="button" class="tool tool-group"><svg><use href="#refresh"/></svg>Обновить</button>
    <button type="button" class="tool tool-group"><svg><use href="#settings"/></svg>Настройки</button>
    <button type="button" class="tool tool-group"><svg><use href="#start"/></svg>Запуск</button>
    <button type="button" class="tool" disabled><svg><use href="#stop"/></svg>Остановка</button>
    <button type="button" class="tool" disabled><svg><use href="#restart"/></svg>Перезапуск</button>
    <div class="tool-right"><button type="button" class="tool"><svg><use href="#help"/></svg>Помощь</button></div>
  </nav>

  <div class="workspace">
    <section class="panel folders">
      <div class="panel-title active">
        <h2>Папки [Фильмы]</h2>
        <button type="button" aria-label="Свернуть панель"><svg viewBox="0 0 10 10"><path d="M7 1v8L3 5z" fill="currentColor"/></svg></button>
        <button type="button" aria-label="Закрепить"><svg><use href="#pin"/></svg></button>
        <button type="button" aria-label="Закрыть панель"><svg viewBox="0 0 10 10"><path d="M1 1l8 8M9 1L1 9" stroke="currentColor"/></svg></button>
      </div>
      <div class="tree-wrap">
        <div class="tree-scroll">
          <table class="tree">
            <colgroup><col><col class="c90"><col class="c30"><col class="c30"><col class="c30"></colgroup>
            <thead>
              <tr>
                <th class="sort"><svg viewBox="0 0 8 8"><path d="M4 .500L7.500 7.500H.5z"/></svg></th>
                <th>Оценка</th>
                <th><svg class="i16"><use href="#users"/></svg></th>
                <th><svg class="i16"><use href="#key"/></svg></th>
                <th><svg class="i16"><use href="#sync"/></svg></th>
              </tr>
            </thead>
            <tbody id="tree"></tbody>
          </table>
        </div>
        <div class="vscroll">
          <svg viewBox="0 0 8 8"><path d="M1 6l3-3.500L7 6z"/></svg>
          <span class="vthumb"></span>
          <svg viewBox="0 0 8 8"><path d="M1 2l3 3.500L7 2z"/></svg>
        </div>
      </div>
      <div class="tree-tools">
        <button type="button" aria-label="Изменить"><svg class="i16"><use href="#edit"/></svg></button>
        <button type="button" aria-label="Удалить"><svg class="i16"><use href="#delete"/></svg></button>
        <button type="button" class="gap" aria-label="Облако"><svg class="i16"><use href="#cloudFolder"/></svg></button>
        <button type="button" class="gap" aria-label="Погода"><svg class="i16"><use href="#weather"/></svg></button>
        <button type="button" class="gap" aria-label="Сетка"><svg class="i16"><use href="#grid"/></svg></button>
        <button type="button" class="gap" aria-label="Сохранить"><svg class="i16"><use href="#save"/></svg></button>
        <button type="button" aria-label="Открыть"><svg class="i16"><use href="#open"/></svg></button>
        <button type="button" class="gap" aria-label="Ключ"><svg class="i16"><use href="#key"/></svg></button>
        <button type="button" class="gap" aria-label="Пользователи"><svg class="i16"><use href="#users"/></svg></button>
        <button type="button" class="gap" aria-label="Отдых"><svg class="i16"><use href="#palm"/></svg></button>
      </div>
      <div class="bottom-edge"><span></span></div>
    </section>

    <section class="panel list">
      <div class="panel-title">
        <h2>Список [Фильмы]</h2>
        <button type="button" aria-label="Свернуть список"><svg viewBox="0 0 10 10"><path d="M7 1v8L3 5z" fill="currentColor"/></svg></button>
        <button type="button" aria-label="Закрепить список"><svg><use href="#pin"/></svg></button>
      </div>
      <div class="tabs">
        <button type="button" class="tab current">Таблица</button>
        <button type="button" class="tab">Карточки</button>
      </div>
      <div class="grid-wrap">
        <table class="items">
          <colgroup><col class="c211"><col class="c110"><col class="c74"><col class="c90"><col><col class="c98"><col class="c95"></colgroup>
          <thead>
            <tr><th>Название</th><th>Жанр</th><th>Год</th><th>Оценка</th><th class="path"><svg viewBox="0 0 8 8"><path d="M4 .500L7.500 7.500H.5z"/></svg>Путь</th><th>Размер файла</th><th>Длительность</th></tr>
          </thead>
          <tbody id="items"></tbody>
        </table>
      </div>
      <div class="list-bottom">
        <button type="button" disabled aria-label="В начало"><svg viewBox="0 0 14 10"><path d="M1 1h1.500v8H1zM7 1v8L3 5zM12 1v8L8 5z"/></svg></button>
        <button type="button" disabled aria-label="Страница назад"><svg viewBox="0 0 14 10"><path d="M6 1v8L2 5zM12 1v8L8 5z"/></svg></button>
        <button type="button" disabled aria-label="Назад"><svg viewBox="0 0 14 10"><path d="M9 1v8L5 5z"/></svg></button>
        <button type="button" aria-label="Вперёд"><svg viewBox="0 0 14 10"><path d="M5 1v8l4-4z"/></svg></button>
        <button type="button" aria-label="Страница вперёд"><svg viewBox="0 0 14 10"><path d="M2 1v8l5-4zM8 1v8l5-4z"/></svg></button>
        <button type="button" aria-label="В конец"><svg viewBox="0 0 14 10"><path d="M1 1v8l5-4zM6 1v8l5-4zM11 1h2v8h-2z"/></svg></button>
        <div class="hscroll">
          <svg viewBox="0 0 8 8"><path d="M6 1v6L2.500 4z"/></svg>
          <span class="hthumb"></span>
          <svg viewBox="0 0 8 8"><path d="M2 1v6l3.500-3z"/></svg>
        </div>
      </div>
      <div class="list-edge">
        <svg class="i16"><use href="#sync"/></svg>
        <svg class="i16"><use href="#grid"/></svg>
        <svg class="i16"><use href="#users"/></svg>
        <svg class="i16"><use href="#save"/></svg>
      </div>
    </section>

    <aside class="side">
      <span class="side-grip"></span>
      <button type="button" class="side-btn"><svg><use href="#script"/></svg>Запуск HMSEditor</button>
      <button type="button" class="side-btn"><svg><use href="#script"/></svg>Запуск в VLC</button>
      <button type="button" class="side-btn"><svg><use href="#script"/></svg>Создать ПОИСК</button>
    </aside>
  </div>

  <footer class="taskbar">
    <button type="button" class="orb" aria-label="Пуск"><svg><use href="#orb"/></svg></button>
    <button type="button" class="task" aria-label="Кувшин"><svg><use href="#jug"/></svg></button>
    <button type="button" class="task" aria-label="Панель управления"><svg><use href="#control"/></svg></button>
    <button type="button" class="task" aria-label="Калькулятор"><svg><use href="#calc"/></svg></button>
    <button type="button" class="task" aria-label="Проводник"><svg><use href="#explorer"/></svg></button>
    <button type="button" class="task" aria-label="GOM Player"><svg><use href="#gom"/></svg></button>
    <button type="button" class="task" aria-label="S"><svg><use href="#sapp"/></svg></button>
    <button type="button" class="task open" aria-label="Домашний медиа-сервер"><svg><use href="#mediaServer"/></svg></button>
    <button type="button" class="task" aria-label="Firefox"><svg><use href="#firefox"/></svg></button>
    <button type="button" class="task" aria-label="Chrome"><svg><use href="#chrome"/></svg></button>
    <button type="button" class="task" aria-label="Total Commander"><svg><use href="#commander"/></svg></button>
    <button type="button" class="task" aria-label="Билеты"><svg><use href="#ticket"/></svg></button>
    <button type="button" class="task" aria-label="Монитор"><svg><use href="#monitor"/></svg></button>
    <button type="button" class="task open" aria-label="Chrome, окно"><svg><use href="#chrome"/></svg></button>

    <div class="tray">
      <dl class="net"><dt>U:</dt><dd>0,00 Mbit/s</dd><dt>D:</dt><dd>0,00 Mbit/s</dd></dl>
      <span class="lang">RU</span>
      <button type="button" class="tray-toggle" aria-label="Скрытые значки"><svg viewBox="0 0 8 8"><path d="M0 6l4-4 4 4z"/></svg></button>
      <svg class="flag-ru"><use href="#flagRu"/></svg>
      <svg class="i16"><use href="#plug"/></svg>
      <svg class="i16"><use href="#greenFlag"/></svg>
      <svg class="i16"><use href="#flag"/></svg>
      <svg class="i16"><use href="#signal"/></svg>
      <svg class="i16"><use href="#speaker"/></svg>
      <time class="clock" datetime="2019-02-14T19:19">19:19<br>14.02.2019</time>
      <button type="button" class="show-desktop" aria-label="Показать рабочий стол"></button>
    </div>
  </footer>

  <!-- Hidden tray icons -->
  <div class="tray-popup">
    <div class="tray-popup-inner">
      <div class="tray-icons">
        <svg class="i16"><use href="#netOff"/></svg><svg class="i16"><use href="#wifi"/></svg><svg class="i16"><use href="#idm"/></svg>
        <svg class="i16"><use href="#bluetooth"/></svg><svg class="i16"><use href="#qip"/></svg><svg class="i16"><use href="#player"/></svg>
        <svg class="i16"><use href="#app"/></svg><svg class="i16"><use href="#camera"/></svg><svg class="i16"><use href="#meter"/></svg>
      </div>
      <div class="tray-custom"><a href="#">Настроить...</a></div>
    </div>
  </div>

  <script src="script.js"></script>
</body>
</html>
```
FILE: styles.css
```css
* { box-sizing: border-box; }

html, body { height: 100%; }

body {
  margin: 0;
  display: flex;
  flex-direction: column;
  position: relative;
  overflow: hidden;
  background: #708896;
  color: #000;
  font: 11px/14px "DejaVu Sans Condensed", "DejaVu Sans", sans-serif;
}

button {
  font: inherit; color: inherit;
  padding: 0; border: 0; background: none;
}
h1, h2 { margin: 0; font: inherit; }
table { border-collapse: separate; border-spacing: 0; table-layout: fixed; }
svg { display: block; flex: none; }
.sprite { position: absolute; width: 0; height: 0; }
.i16 { width: 16px; height: 16px; }

/* ===== Title bar ===== */
.titlebar {
  display: flex; align-items: center; gap: 4px;
  height: 22px;
  padding-left: 1px;
  flex: none;
  border-bottom: 1px solid #34476e;
  box-shadow: inset 0 -1px 0 #c4d2f2;
  background:
    radial-gradient(ellipse 180px 30px at 130px 10px, rgba(228,234,250,.95), rgba(228,234,250,.6) 60%, transparent),
    radial-gradient(ellipse 70px 12px at 360px 14px, rgba(84,104,176,.5), transparent),
    radial-gradient(ellipse 60px 10px at 590px 16px, rgba(96,120,190,.4), transparent),
    radial-gradient(circle 24px at 950px 14px, rgba(160,180,225,.5), transparent),
    radial-gradient(circle 24px at 1025px 14px, rgba(160,180,225,.5), transparent),
    radial-gradient(circle 24px at 1250px 16px, rgba(140,170,215,.5), transparent),
    radial-gradient(circle 24px at 1325px 16px, rgba(140,170,215,.5), transparent),
    radial-gradient(circle 24px at 1408px 18px, rgba(150,80,140,.4), transparent),
    linear-gradient(90deg, #8c9fdc, #7d95d8 25%, #7290d0 44%, #7c9cde 48%, #7b9bde 54%, #5478c6 62%, #4b70be 70%, #4468b4);
}
.titlebar h1 { font-size: 12px; }
.title-flag { width: 16px; height: 12px; margin: 9px 114px 0 auto; }
.win-buttons {
  display: flex; align-self: flex-start;
  height: 18px;
  margin-right: 3px;
  border: 1px solid #26395f; border-top: 0;
  border-radius: 0 0 5px 5px;
  overflow: hidden;
}
.win-btn {
  display: grid; place-items: center;
  width: 28px;
  border-right: 1px solid #26395f;
  background: linear-gradient(#a9bbdf, #7d95c8 50%, #4f6cab 50%, #6d8cc9);
}
.win-btn svg { width: 12px; height: 12px; fill: #fff; stroke: #34415c; stroke-width: .6; }
.win-btn .stroke { fill: none; stroke: #fff; stroke-width: 2; }
.win-close { width: 46px; border-right: 0; background: linear-gradient(#e0a090, #cc6a54 50%, #b02c14 50%, #cf5a3c); }

/* ===== Toolbar ===== */
.toolbar {
  display: flex;
  height: 74px;
  padding: 5px 5px 0 5px;
  flex: none;
  border-bottom: 1px solid #b4ccd9;
  background: linear-gradient(#adc8d7, #a4bccb 45%, #8da5b4 65%, #6f8897);
}
.grip {
  width: 2px; height: 64px; margin-right: 3px;
  background: repeating-linear-gradient(#22323c 0 2px, transparent 2px 5px);
}
.tool {
  display: flex; flex-direction: column; align-items: center; gap: 1px;
  width: 75px;
  font-size: 12px; line-height: 16px;
}
.tool svg { width: 48px; height: 48px; }
.tool-group { margin-left: 15px; }
.tool:disabled { color: #66747c; }
.tool:disabled svg { filter: grayscale(1); opacity: .35; }
.tool-right {
  height: 64px;
  margin-left: auto;
  padding-left: 4px;
  border-left: 1px solid #5c7381;
  box-shadow: inset 1px 0 0 #b4ccd9;
}

/* ===== Workspace ===== */
.workspace {
  display: flex;
  flex: 1; min-height: 0;
  padding: 2px 0 0 2px;
}
.panel { display: flex; flex-direction: column; min-width: 0; min-height: 0; }
.folders { width: 504px; flex: none; margin-right: 4px; }
.list { flex: 1; }

.panel-title {
  display: flex; align-items: center; gap: 4px;
  height: 18px;
  margin-bottom: 2px;
  padding: 0 4px 0 2px;
  flex: none;
  border: 1px solid #3b505d;
}
.panel-title h2 { flex: 1; }
.panel-title svg { width: 10px; height: 10px; }
.panel-title.active { background: #0f2735; border-color: #0f2735; color: #fff; }

.c30 { width: 30px; }
.c74 { width: 74px; }
.c90 { width: 90px; }
.c95 { width: 95px; }
.c98 { width: 98px; }
.c110 { width: 110px; }
.c211 { width: 211px; }

th {
  height: 19px;
  padding: 0;
  font-weight: normal;
  background: #7990a0;
  border-left: 1px solid #a9c0ce;
  border-right: 1px solid #4d6370;
  border-top: 1px solid #5a707e;
}
th svg { margin: 0 auto; }

/* ===== Folder tree ===== */
.tree-wrap { display: flex; flex: 1; min-height: 0; background: #fff; }
.tree-scroll { flex: 1; overflow: hidden; }
.tree { width: 100%; }
.tree th.sort svg { width: 8px; height: 8px; margin: 0 6px 0 auto; fill: #b4c8d4; stroke: #46586a; }
.tree td { height: 19px; padding: 0; }
.tree td > svg { margin: 0 auto; }
.node { display: flex; align-items: center; height: 19px; white-space: nowrap; }
.node > svg { width: 16px; height: 16px; margin: 0 2px 0 1px; }
.node > svg.wide { margin-right: 3px; }
.node-label { padding: 0 1px; }
.node-label.dim { color: #8a8a8a; }
.node-label.selected {
  flex: 1;
  line-height: 17px;
  border: 1px dotted #c87a30;
  background: #3399ff; color: #fff;
}
.dim-icon { opacity: .3; }

/* dotted guides: v = full height, top = upper half, h = stub to the icon */
.guide {
  --v: repeating-linear-gradient(#8c8c8c 0 1px, transparent 1px 2px);
  --h: repeating-linear-gradient(90deg, #8c8c8c 0 1px, transparent 1px 2px);
  display: grid; place-items: center;
  width: 19px; height: 19px;
  flex: none;
  background-repeat: no-repeat;
}
.guide.v { background-image: var(--v); background-size: 1px 19px; background-position: 9px 0; }
.guide.v.h { background-image: var(--v), var(--h); background-size: 1px 19px, 10px 1px; background-position: 9px 0, 9px 9px; }
.guide.top.h { background-image: var(--v), var(--h); background-size: 1px 10px, 10px 1px; background-position: 9px 0, 9px 9px; }

.expander {
  width: 11px; height: 11px;
  border: 1px solid #6f87a8;
  border-radius: 1px;
  background:
    linear-gradient(#1f3a5c, #1f3a5c) center / 5px 1px no-repeat,
    linear-gradient(135deg, #fff, #bccbe2);
}
.expander.plus {
  background:
    linear-gradient(#1f3a5c, #1f3a5c) center / 5px 1px no-repeat,
    linear-gradient(#1f3a5c, #1f3a5c) center / 1px 5px no-repeat,
    linear-gradient(135deg, #fff, #bccbe2);
}

.stars { display: flex; justify-content: center; }
.stars svg { width: 16px; height: 16px; fill: url(#gEmpty); stroke: #a8a8a8; stroke-width: .8; }
.stars .auto { fill: url(#gStar); stroke: #96959f; }
.stars .own { fill: url(#gGold); stroke: #b08a10; }

/* ===== Scrollbars ===== */
.vscroll {
  display: flex; flex-direction: column; align-items: center;
  width: 17px;
  padding: 5px 0;
  background: #efefef;
}
.vscroll svg, .hscroll svg { width: 8px; height: 8px; fill: #333; }
.vthumb {
  width: 15px; height: 45%;
  margin: 58px 0 auto;
  border: 1px solid #8e8e8e; border-radius: 2px;
  background:
    repeating-linear-gradient(#555 0 1px, transparent 1px 3px) center / 7px 8px no-repeat,
    linear-gradient(90deg, #f6f6f6, #e6e6e8 48%, #cbcbcf 52%, #dedee0);
}
.hscroll {
  display: flex; align-items: center;
  flex: 1;
  padding: 0 4px;
  background: #ececec;
}
.hthumb {
  width: 185px; height: 17px;
  margin: 0 auto 0 6px;
  border: 1px solid #8e8e8e; border-radius: 2px;
  background:
    repeating-linear-gradient(90deg, #555 0 1px, transparent 1px 3px) center / 8px 7px no-repeat,
    linear-gradient(#f6f6f6, #e6e6e8 48%, #cbcbcf 52%, #dedee0);
}

.tree-tools {
  display: flex; align-items: center;
  height: 26px;
  padding-right: 4px;
  flex: none;
  background: linear-gradient(#9fb8c7, #6f8796);
}
.tree-tools button { width: 25px; display: grid; place-items: center; }
.tree-tools .gap { margin-left: 5px; }
.bottom-edge {
  height: 5px;
  flex: none;
  border-top: 1px solid #34495a;
  background: #a5bdcb;
}
.bottom-edge span { display: block; width: 92px; height: 4px; margin-left: 62%; background: #8aa0af; border: solid #34495a; border-width: 0 1px; }

/* ===== List ===== */
.tabs {
  display: flex; align-items: flex-end; gap: 1px;
  height: 22px;
  padding-left: 4px;
  flex: none;
  border-bottom: 1px solid #1d3341;
  background: linear-gradient(#8fa7b6, #5c7280);
}
.tab { height: 18px; padding: 2px 4px 0; background: #71899a; }
.tab.current { height: 20px; padding-top: 3px; border: 1px solid #1d3341; border-bottom: 0; background: #7990a0; }

.grid-wrap { flex: 1; min-height: 0; padding-top: 2px; overflow: hidden; background: linear-gradient(#708896 2px, #fff 2px); }
.items { width: calc(100% + 24px); }
.items th.path svg { float: right; width: 8px; height: 8px; margin: 3px 6px 0; fill: none; stroke: #26343e; }
.items td {
  height: 20px;
  padding: 0 2px 0 1px;
  overflow: hidden;
  white-space: pre;
  border-right: 1px solid #50687a;
  border-bottom: 1px solid #50687a;
}
.items tbody tr:nth-child(even) { background: #bfd8e6; }
.items td.center { text-align: center; }
.clip { overflow: hidden; }
.name { display: flex; align-items: center; padding-left: 2px; }
.name svg { width: 16px; height: 16px; margin: 0 4px 0 5px; }
.name .expander { flex: none; }
.name span { flex: 1; overflow: hidden; }

.list-bottom { display: flex; height: 19px; flex: none; }
.list-bottom button {
  display: grid; place-items: center;
  width: 17px;
  border-right: 1px solid #6d8493;
  background: linear-gradient(#a5becd, #7e97a6);
}
.list-bottom button:disabled { border-right-color: transparent; background: #8fa8b7; }
.list-bottom button svg { width: 14px; height: 10px; }
.list-bottom button:disabled svg { opacity: .6; }
.list-edge {
  display: flex; gap: 10px;
  height: 7px;
  padding: 4px 0 0 14px;
  flex: none;
  overflow: hidden;
  background: #9fb8c7;
}

/* ===== Side bar ===== */
.side {
  width: 117px;
  margin-left: 3px;
  padding: 4px 5px 0 4px;
  flex: none;
  background: linear-gradient(90deg, #adc8d7, #a2bac9 45%, #8ba3b2 65%, #6f8897);
}
.side-grip {
  display: block;
  height: 2px;
  margin-bottom: 1px;
  background: repeating-linear-gradient(90deg, #22323c 0 2px, transparent 2px 4px);
}
.side-btn {
  display: flex; flex-direction: column; align-items: center; gap: 1px;
  width: 100%; height: 75px;
  padding-top: 4px;
  font-size: 12px; line-height: 16px;
  white-space: nowrap;
}
.side-btn svg { width: 48px; height: 48px; }
.side-btn:not(:last-child) { border-bottom: 1px solid #c0d6e2; box-shadow: inset 0 -1px 0 #5c7381; }

/* ===== Taskbar ===== */
.taskbar {
  display: flex; align-items: center; gap: 2px;
  height: 40px;
  padding-left: 7px;
  flex: none;
  border-top: 1px solid #1d2c4a;
  box-shadow: inset 0 1px 0 #8ca4d0;
  background:
    linear-gradient(rgba(255,255,255,.08), rgba(20,40,90,.12) 50%, transparent),
    linear-gradient(90deg, #4a6596, #6482bc 28%, #5f7dba 50%, #5572ae 65%, #47628f);
}
.orb { margin-right: 10px; }
.orb svg { width: 40px; height: 38px; }
.task {
  display: grid; place-items: center;
  width: 60px; height: 38px;
}
.task svg { width: 32px; height: 32px; }
.task.open {
  border: 1px solid #2c3f66; border-radius: 3px;
  box-shadow: inset 0 0 0 1px rgba(255,255,255,.6);
  background: linear-gradient(135deg, #dbe3f2, #a3b4d8 45%, #8aa0cf 55%, #b0c0e0);
}
.tray { display: flex; align-items: center; margin-left: auto; align-self: stretch; color: #fff; }
.tray .i16 { margin-left: 8px; }
.net {
  display: grid; grid-template-columns: 48px auto;
  margin: 0 9px 0 0;
  color: #0a7a1c;
  font: bold 12px/11px "Liberation Mono", monospace;
}
.net dd { margin: 0; }
.lang { margin-right: 10px; padding-bottom: 4px; font-size: 12px; }
.tray-toggle {
  display: grid; place-items: center;
  width: 20px; height: 19px;
  margin-right: 6px;
  border: 1px solid #c4cee0; border-radius: 2px;
  background: linear-gradient(#a8b4c8, #6c7c9c);
}
.tray-toggle svg { width: 8px; height: 8px; fill: #fff; }
.flag-ru { width: 16px; height: 12px; }
.clock { width: 76px; line-height: 17px; text-align: center; margin: 0 1px 0 5px; }
.show-desktop {
  width: 14px; align-self: stretch;
  margin-left: 3px;
  border: 1px solid #b4c4e0;
  background: linear-gradient(135deg, #7c92bc, #3c5486 50%, #6c84b4);
}

.tray-popup {
  position: absolute; right: 186px; bottom: 48px;
  width: 130px;
  padding: 6px;
  border: 1px solid #46505e; border-radius: 6px;
  background: linear-gradient(#e0eafc, #c8d8f0);
  box-shadow: 0 1px 6px rgba(0,0,0,.5);
}
.tray-popup-inner { border: 1px solid #5c6674; background: #fff; }
.tray-icons {
  display: grid; grid-template-columns: repeat(3, 16px); gap: 16px;
  justify-content: center;
  padding: 15px 2px 15px 0;
}
.tray-custom {
  padding: 14px 0;
  border-top: 1px solid #ccd8e4;
  background: #f0f4fb;
  text-align: center;
}
.tray-custom a { color: #1c62ac; text-decoration: none; }
```
FILE: script.js
```js
// [level, label, icon, state]  state: '+' collapsed, '-' expanded, '' leaf
const nodes = [
  [0, 'Интернет телевидение', 'tv', '+'],
  [0, 'История навигации', 'history', '+'],
  [0, 'Каталоги медиа-ресурсов', 'catalog', '+'],
  [0, 'Коллекции', 'collection', '+'],
  [0, 'Музыка (Визуализация)', 'musicFolder', '+'],
  [0, 'Образы CD/SACD/DVD/DVD-A/BD (ISO)', 'disc', '+'],
  [0, 'Подкасты', 'rssFolder', '-'],
  [1, 'Filmix', 'rssFolder', '-'],
  [2, '0 Поиск (10)', 'rssFolder', '-'],
  [3, '"Набрать текст"', 'collection', ''],
  [3, 'Алита: Боевой ангел (10)', 'rss', '-'],
  [4, 'А (10)', 'box', '-'],
  [5, 'Алита: Боевой ангел (2018) (10)', 'box', ''],
  [2, '1 Последние поступления', 'rss', '+'],
  [2, '2 Новые фильмы', 'rss', '-'],
  [3, '#', 'box', '+'],
  [3, 'А', 'box', '-'],
  [4, 'Автор (2017)', 'box', '+'],
  [4, 'Аксиома (2018)', 'box', '+'],
  [4, 'Алита: Боевой ангел (2018) (10)', 'box', ''],
  [4, 'Ангел (2018)', 'box', '+'],
  [4, 'Асфальтовые джунгли (2018)', 'box', '+'],
  ...[...'БВГДЖЗИКЛМНОПРС'].map(c => [3, c, 'box', '+'])
];
const SELECTED = 12;

const icon = (id, cls = '') => `<svg class="${cls}"><use href="#${id}"/></svg>`;

function stars(n, cls) {
  let s = '';
  for (let i = 0; i < 5; i++) s += icon('star', i < n ? cls : '');
  return `<div class="stars">${s}</div>`;
}

// does the branch at this level go on below row i
function goesOn(i, level) {
  for (let k = i + 1; k < nodes.length; k++) {
    if (nodes[k][0] < level) return false;
    if (nodes[k][0] === level) return true;
  }
  return true;
}

function expander(state) {
  if (!state) return '';
  return `<button type="button" class="expander ${state === '+' ? 'plus' : ''}" aria-label="${state === '+' ? 'Развернуть' : 'Свернуть'}"></button>`;
}

document.getElementById('tree').innerHTML = nodes.map(([level, label, ic, state], i) => {
  let guides = '';
  for (let l = 0; l < level; l++) guides += `<span class="guide ${goesOn(i, l) ? 'v' : ''}"></span>`;
  guides += `<span class="guide h ${goesOn(i, level) ? 'v' : 'top'}">${expander(state)}</span>`;
  const cls = i === SELECTED ? 'selected' : i === 1 ? 'dim' : '';
  const rating = i === 2 ? stars(2, 'own') : stars(3, 'auto');
  const sync = i < 7 ? '' : icon('noSync', 'i16' + (i === 8 || i === 9 ? ' dim-icon' : ''));
  return `<tr><td><div class="node">${guides}${icon(ic, ic === 'rss' ? 'wide' : '')}<span class="node-label ${cls}">${label}</span></div></td>
    <td>${rating}</td><td></td><td></td><td>${sync}</td></tr>`;
}).join('');

const genre = 'Триллеры,  Фантастик';
const video = 'https://vs1.cdnlast.com/s/c18406332c973a0b716e8d5e010f266';
const items = [
  ['Страна: Аргентина,  Канада,  США', '', '', '-Info3', '00:00:01'],
  ['Режиссер: Роберт Родригес', '', '', '-Info4', '00:00:01'],
  ['Жанр: Триллеры,  Фантастика,  М', '', '', '-Info5', '00:00:01'],
  ['Перевод: Профессиональный, мно', '', '', '-Info6', '00:00:01'],
  ['TS 720', '', '', '-Info7', '00:00:01'],
  ['Описание:Действие фантастичес', '', '', '-Info8', '00:00:01'],
  ['IMDB: 7.6 (9697)', '', '', '-Info9', '00:00:01'],
  ['Трейлер', genre, '2019', 'https://filmix.site/trillery/124063/trailers', '00:04:00.000'],
  ['[480p] Многоголосый, P - [КОЛОВ', genre, '2019', video, '02:01:00.000'],
  ['[720p] Многоголосый, P - [КОЛОВ', genre, '2019', video, '02:01:00.000']
];

document.getElementById('items').innerHTML = items.map(([name, g, year, path, time]) =>
  `<tr><td><div class="name">${expander('+')}${icon('film')}<span>${name}</span></div></td>` +
  `<td><div class="clip">${g}</div></td><td class="center">${year}</td><td>${stars(3, 'auto')}</td>` +
  `<td><div class="clip">${path}</div></td><td></td><td class="center">${time}</td></tr>`
).join('');
```
